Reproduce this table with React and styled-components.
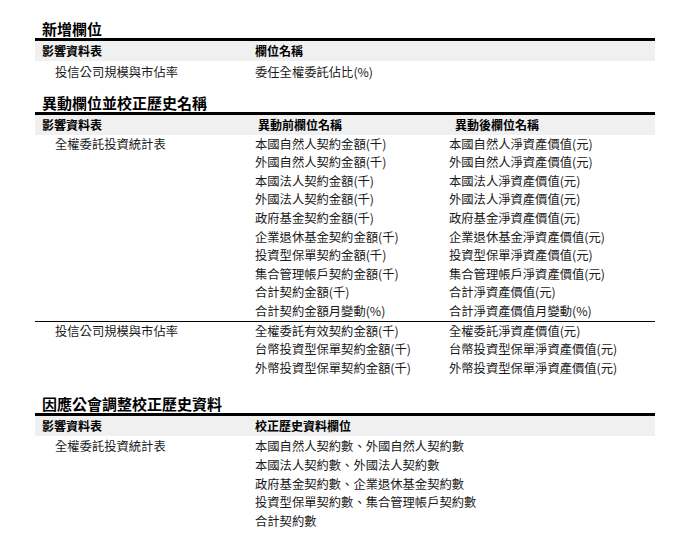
import React from 'react';
import styled, { createGlobalStyle } from 'styled-components';

const GlobalStyle = createGlobalStyle`
  body {
    margin: 0;
    background: #ffffff;
    font-family: "Noto Sans CJK TC", "Noto Sans", sans-serif;
  }
`;

const Page = styled.div`
  width: 620px;
  padding: 24px 0 0 35px;
`;

const Section = styled.section`
  margin-bottom: ${p => p.gap}px;
`;

const Title = styled.h2`
  margin: 0;
  padding: 0 0 4px 7px;
  font-size: 15px;
  line-height: 10px;
  height: 10px;
  font-weight: 700;
  color: #000;
  white-space: nowrap;
`;

const Table = styled.div`
  border-top: 3px solid #000;
`;

const Head = styled.div`
  display: grid;
  grid-template-columns: ${p => p.cols};
  height: 20px;
  background: #f0f0f0;
  font-size: 12px;
  line-height: 20px;
  font-weight: 700;
  color: #000;
`;

const HeadCell = styled.div`
  padding-left: ${p => p.indent || 0}px;
  white-space: nowrap;
`;

const Body = styled.div`
  padding-top: ${p => p.pad}px;
`;

const Group = styled.div`
  border-top: ${p => (p.rule ? '1px solid #000' : 'none')};
`;

const Row = styled.div`
  display: grid;
  grid-template-columns: ${p => p.cols};
  height: 18.6px;
  font-size: 12.3px;
  line-height: 18.6px;
  color: #1a1a1a;
`;

const Cell = styled.div`
  padding-left: ${p => p.indent || 0}px;
  white-space: nowrap;
`;

const sections = [
  {
    title: '新增欄位',
    cols: '220px 1fr',
    head: [['影響資料表', 7], ['欄位名稱', 0]],
    pad: 2,
    gap: 16,
    groups: [
      { table: '投信公司規模與市佔率', lines: [['委任全權委託佔比(%)']] },
    ],
  },
  {
    title: '異動欄位並校正歷史名稱',
    cols: '220px 194px 1fr',
    head: [['影響資料表', 7], ['異動前欄位名稱', 3], ['異動後欄位名稱', 6]],
    pad: 0,
    gap: 22,
    groups: [
      {
        table: '全權委託投資統計表',
        lines: [
          ['本國自然人契約金額(千)', '本國自然人淨資產價值(元)'],
          ['外國自然人契約金額(千)', '外國自然人淨資產價值(元)'],
          ['本國法人契約金額(千)', '本國法人淨資產價值(元)'],
          ['外國法人契約金額(千)', '外國法人淨資產價值(元)'],
          ['政府基金契約金額(千)', '政府基金淨資產價值(元)'],
          ['企業退休基金契約金額(千)', '企業退休基金淨資產價值(元)'],
          ['投資型保單契約金額(千)', '投資型保單淨資產價值(元)'],
          ['集合管理帳戶契約金額(千)', '集合管理帳戶淨資產價值(元)'],
          ['合計契約金額(千)', '合計淨資產價值(元)'],
          ['合計契約金額月變動(%)', '合計淨資產價值月變動(%)'],
        ],
      },
      {
        table: '投信公司規模與市佔率',
        lines: [
          ['全權委託有效契約金額(千)', '全權委託淨資產價值(元)'],
          ['台幣投資型保單契約金額(千)', '台幣投資型保單淨資產價值(元)'],
          ['外幣投資型保單契約金額(千)', '外幣投資型保單淨資產價值(元)'],
        ],
      },
    ],
  },
  {
    title: '因應公會調整校正歷史資料',
    cols: '220px 1fr',
    head: [['影響資料表', 7], ['校正歷史資料欄位', 0]],
    pad: 1,
    gap: 0,
    groups: [
      {
        table: '全權委託投資統計表',
        lines: [
          ['本國自然人契約數、外國自然人契約數'],
          ['本國法人契約數、外國法人契約數'],
          ['政府基金契約數、企業退休基金契約數'],
          ['投資型保單契約數、集合管理帳戶契約數'],
          ['合計契約數'],
        ],
      },
    ],
  },
];

const App = () => (
  <React.Fragment>
    <GlobalStyle />
    <Page>
      {sections.map(s => (
        <Section key={s.title} gap={s.gap}>
          <Title>{s.title}</Title>
          <Table>
            <Head cols={s.cols}>
              {s.head.map(([label, indent]) => (
                <HeadCell key={label} indent={indent}>{label}</HeadCell>
              ))}
            </Head>
            <Body pad={s.pad}>
              {s.groups.map((g, gi) => (
                <Group key={`${s.title}-${gi}`} rule={gi > 0}>
                  {g.lines.map((line, li) => (
                    <Row key={line[0]} cols={s.cols}>
                      <Cell indent={20}>{li === 0 ? g.table : ''}</Cell>
                      {line.map(text => <Cell key={text}>{text}</Cell>)}
                    </Row>
                  ))}
                </Group>
              ))}
            </Body>
          </Table>
        </Section>
      ))}
    </Page>
  </React.Fragment>
);

export default App;
